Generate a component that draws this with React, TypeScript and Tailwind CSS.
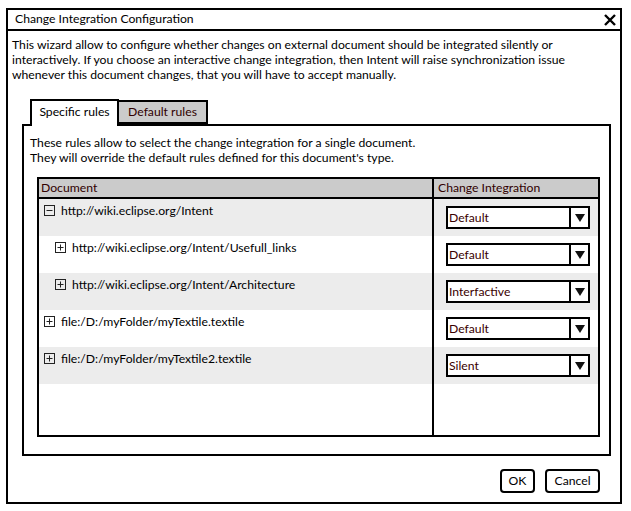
import React from "react";

type Row = { label: string; indent: boolean; open: boolean; value: string };

const ROWS: Row[] = [
  { label: "http://wiki.eclipse.org/Intent", indent: false, open: true, value: "Default" },
  { label: "http://wiki.eclipse.org/Intent/Usefull_links", indent: true, open: false, value: "Default" },
  { label: "http://wiki.eclipse.org/Intent/Architecture", indent: true, open: false, value: "Interfactive" },
  { label: "file:/D:/myFolder/myTextile.textile", indent: false, open: false, value: "Default" },
  { label: "file:/D:/myFolder/myTextile2.textile", indent: false, open: false, value: "Silent" },
];

function TreeToggle({ open }: { open: boolean }) {
  return (
    <svg width="11" height="11" viewBox="0 0 11 11" className="shrink-0">
      <rect x="0.5" y="0.5" width="10" height="10" fill="none" stroke="#222" strokeWidth="1" />
      <line x1="2.5" y1="5.5" x2="8.5" y2="5.5" stroke="#222" strokeWidth="1" />
      {!open && <line x1="5.5" y1="2.5" x2="5.5" y2="8.5" stroke="#222" strokeWidth="1" />}
    </svg>
  );
}

function Select({ value }: { value: string }) {
  return (
    <div className="flex h-[23px] w-[144px] border-2 border-black bg-white">
      <div className="flex-1 pl-[1px] leading-[19px] text-[#3a0000]">{value}</div>
      <div className="flex w-[19px] items-center justify-center border-l-2 border-black">
        <svg width="10" height="8" viewBox="0 0 10 8">
          <path d="M0 0 L10 0 L5 8 Z" fill="#111" />
        </svg>
      </div>
    </div>
  );
}

export default function App() {
  return (
    <div
      className="relative h-[511px] w-[631px] bg-white text-[12.2px] text-black"
      style={{ fontFamily: "Lato, 'Noto Sans', sans-serif" }}
    >
      <div className="absolute left-[6px] top-[8px] flex h-[496px] w-[616px] flex-col border-2 border-black">
        {/* Title bar */}
        <div className="flex h-[21px] shrink-0 items-center justify-between border-b-2 border-black pl-[7px] pr-[4px]">
          <span>Change Integration Configuration</span>
          <svg width="12" height="12" viewBox="0 0 12 12">
            <path d="M1 1 L11 11 M11 1 L1 11" stroke="#000" strokeWidth="2.4" />
          </svg>
        </div>

        {/* Description */}
        <p className="ml-[4px] mt-[6px] leading-[15px]">
          This wizard allow to configure whether changes on external document should be integrated silently or
          <br />
          interactively. If you choose an interactive change integration, then Intent will raise synchronization issue
          <br />
          whenever this document changes, that you will have to accept manually.
        </p>

        {/* Tabs */}
        <div className="ml-[22px] mt-[17px] flex h-[25px] items-end">
          <div className="relative z-10 -mb-[2px] flex h-[27px] w-[89px] items-center justify-center border-2 border-b-0 border-black bg-white pb-[2px]">
            Specific rules
          </div>
          <div className="flex h-[24px] w-[89px] items-center justify-center border-2 border-l-0 border-black bg-[#cbcbcb] text-[#300000]">
            Default rules
          </div>
        </div>

        {/* Tab panel */}
        <div className="ml-[14px] mr-[9px] flex h-[332px] flex-col border-2 border-black">
          <p className="ml-[6px] mt-[9px] leading-[15px]">
            These rules allow to select the change integration for a single document.
            <br />
            They will override the default rules defined for this document's type.
          </p>

          <div className="ml-[13px] mr-[9px] mt-[12px] flex h-[260px] flex-col border-2 border-black">
            <div className="flex h-[20px] shrink-0 border-b-2 border-black bg-[#cbcbcb] text-[#300000]">
              <div className="w-[393px] pl-[2px] leading-[18px]">Document</div>
              <div className="flex-1 border-l-2 border-black pl-[4px] leading-[18px]">Change Integration</div>
            </div>
            {ROWS.map((r, i) => (
              <div key={r.label} className={`flex h-[37px] shrink-0 ${i % 2 === 0 ? "bg-[#ececec]" : "bg-white"}`}>
                <div className={`flex w-[393px] items-start gap-[6px] pt-[5px] ${r.indent ? "pl-[16px]" : "pl-[5px]"}`}>
                  <div className="pt-[1px]">
                    <TreeToggle open={r.open} />
                  </div>
                  <span className="leading-[13px]">{r.label}</span>
                </div>
                <div className="flex-1 border-l-2 border-black pl-[12px] pt-[7px]">
                  <Select value={r.value} />
                </div>
              </div>
            ))}
            <div className="flex flex-1">
              <div className="w-[393px]" />
              <div className="flex-1 border-l-2 border-black" />
            </div>
          </div>
        </div>

        {/* Buttons */}
        <div className="mr-[20px] mt-[13px] flex justify-end gap-[10px]">
          <button className="h-[24px] w-[35px] rounded-[4px] border-2 border-black bg-white">OK</button>
          <button className="h-[24px] w-[55px] rounded-[4px] border-2 border-black bg-white">Cancel</button>
        </div>
      </div>
    </div>
  );
}
